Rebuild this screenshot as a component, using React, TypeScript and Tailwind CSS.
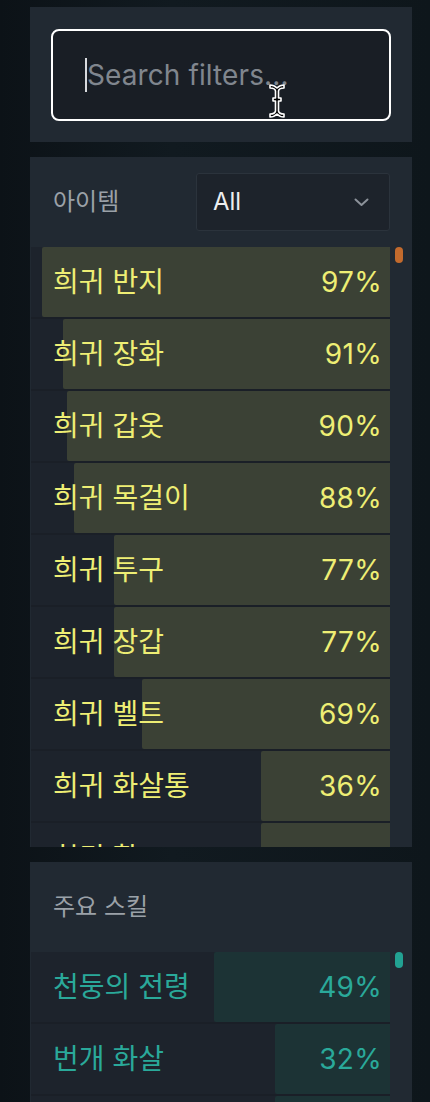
import React from "react";

const FONT = { fontFamily: "Inter, 'Noto Sans CJK KR', 'Noto Sans', sans-serif" };

type Row = { name: string; pct: number };

const items: Row[] = [
  { name: "희귀 반지", pct: 97 },
  { name: "희귀 장화", pct: 91 },
  { name: "희귀 갑옷", pct: 90 },
  { name: "희귀 목걸이", pct: 88 },
  { name: "희귀 투구", pct: 77 },
  { name: "희귀 장갑", pct: 77 },
  { name: "희귀 벨트", pct: 69 },
  { name: "희귀 화살통", pct: 36 },
  { name: "희귀 활", pct: 36 },
];

const skills: Row[] = [
  { name: "천둥의 전령", pct: 49 },
  { name: "번개 화살", pct: 32 },
  { name: "얼음 화살", pct: 32 },
];

function StatRow({ row, tone }: { row: Row; tone: "yellow" | "teal" }) {
  const bar = tone === "yellow" ? "bg-[#3b4135]" : "bg-[#1c3335]";
  const text = tone === "yellow" ? "text-[#eeee74]" : "text-[#2aa99a]";
  return (
    <div className="grid h-[70px] shrink-0 bg-[#1d232c]">
      <div
        className={`[grid-area:1/1] justify-self-end h-full ${bar} rounded-l-[2px]`}
        style={{ width: `${row.pct}%` }}
      />
      <div className={`[grid-area:1/1] flex items-center justify-between pl-[22px] pr-[8px] ${text}`}>
        <span className="text-[28px] leading-none">{row.name}</span>
        <span className="text-[28px] leading-none tracking-[0.3px]">{row.pct}%</span>
      </div>
    </div>
  );
}

function Chevron() {
  return (
    <svg width="15" height="9" viewBox="0 0 15 9" fill="none">
      <polyline points="1.5,1.5 7.5,7 13.5,1.5" stroke="#8c929a" strokeWidth="2" strokeLinecap="round" strokeLinejoin="round" />
    </svg>
  );
}

function IBeam() {
  return (
    <svg width="18" height="36" viewBox="0 0 18 36" className="absolute left-[215px] top-[52px]">
      <path
        d="M2 2 Q6 2 9 5 Q12 2 16 2 L16 5 Q11 5 10.5 8 L10.5 15 L13 15 L13 18 L10.5 18 L10.5 28 Q11 31 16 31 L16 34 Q12 34 9 31 Q6 34 2 34 L2 31 Q7 31 7.5 28 L7.5 18 L5 18 L5 15 L7.5 15 L7.5 8 Q7 5 2 5 Z"
        fill="#000"
        stroke="#fff"
        strokeWidth="1.6"
        strokeLinejoin="round"
      />
    </svg>
  );
}

export default function App() {
  return (
    <div
      className="w-[430px] h-[1102px] overflow-hidden bg-[#0f161c] bg-[linear-gradient(90deg,#0c1217_0%,#111a20_40%,#0e161b_100%)] pt-[7px] pl-[30px]"
      style={FONT}
    >
      <div className="w-[382px] flex flex-col gap-[15px]">
        {/* Search panel */}
        <div className="bg-[#212932] pl-[21px] pr-[21px] pt-[22px] pb-[21px]">
          <div className="relative h-[92px] rounded-[8px] border-2 border-white bg-[#191e25] flex items-center pl-[32px]">
            <span className="w-[2px] h-[34px] bg-[#d8dade]" />
            <span className="text-[28px] leading-none text-[#80868e] tracking-[0.1px]">Search filters...</span>
            <IBeam />
          </div>
        </div>

        {/* Items panel */}
        <div className="bg-[#212932] h-[690px] overflow-hidden flex flex-col">
          <div className="pt-[16px] pb-[16px] pl-[23px] pr-[22px] flex items-center justify-between">
            <span className="text-[24px] leading-none text-[#9ba1a8]">아이템</span>
            <div className="w-[194px] h-[58px] bg-[#1d232b] border border-[#2b333c] rounded-[3px] flex items-center justify-between pl-[16px] pr-[20px]">
              <span className="text-[24px] leading-none text-[#eceef0]">All</span>
              <Chevron />
            </div>
          </div>
          <div className="flex">
            <div className="ml-[1px] w-[359px] flex flex-col gap-[2px] bg-[#1a1f27]">
              {items.map((r) => (
                <StatRow key={r.name} row={r} tone="yellow" />
              ))}
            </div>
            <div className="pl-[5px]">
              <div className="w-[8px] h-[16px] rounded-full bg-[#c26a2d]" />
            </div>
          </div>
        </div>

        {/* Skills panel */}
        <div className="bg-[#212932] h-[320px] overflow-hidden flex flex-col">
          <div className="pl-[23px] pr-[22px] h-[90px] flex items-center">
            <span className="text-[24px] leading-none text-[#9ba1a8]">주요 스킬</span>
          </div>
          <div className="flex">
            <div className="ml-[1px] w-[359px] flex flex-col gap-[2px] bg-[#1a1f27]">
              {skills.map((r) => (
                <StatRow key={r.name} row={r} tone="teal" />
              ))}
            </div>
            <div className="pl-[5px]">
              <div className="w-[8px] h-[16px] rounded-full bg-[#22a192]" />
            </div>
          </div>
        </div>
      </div>
    </div>
  );
}
